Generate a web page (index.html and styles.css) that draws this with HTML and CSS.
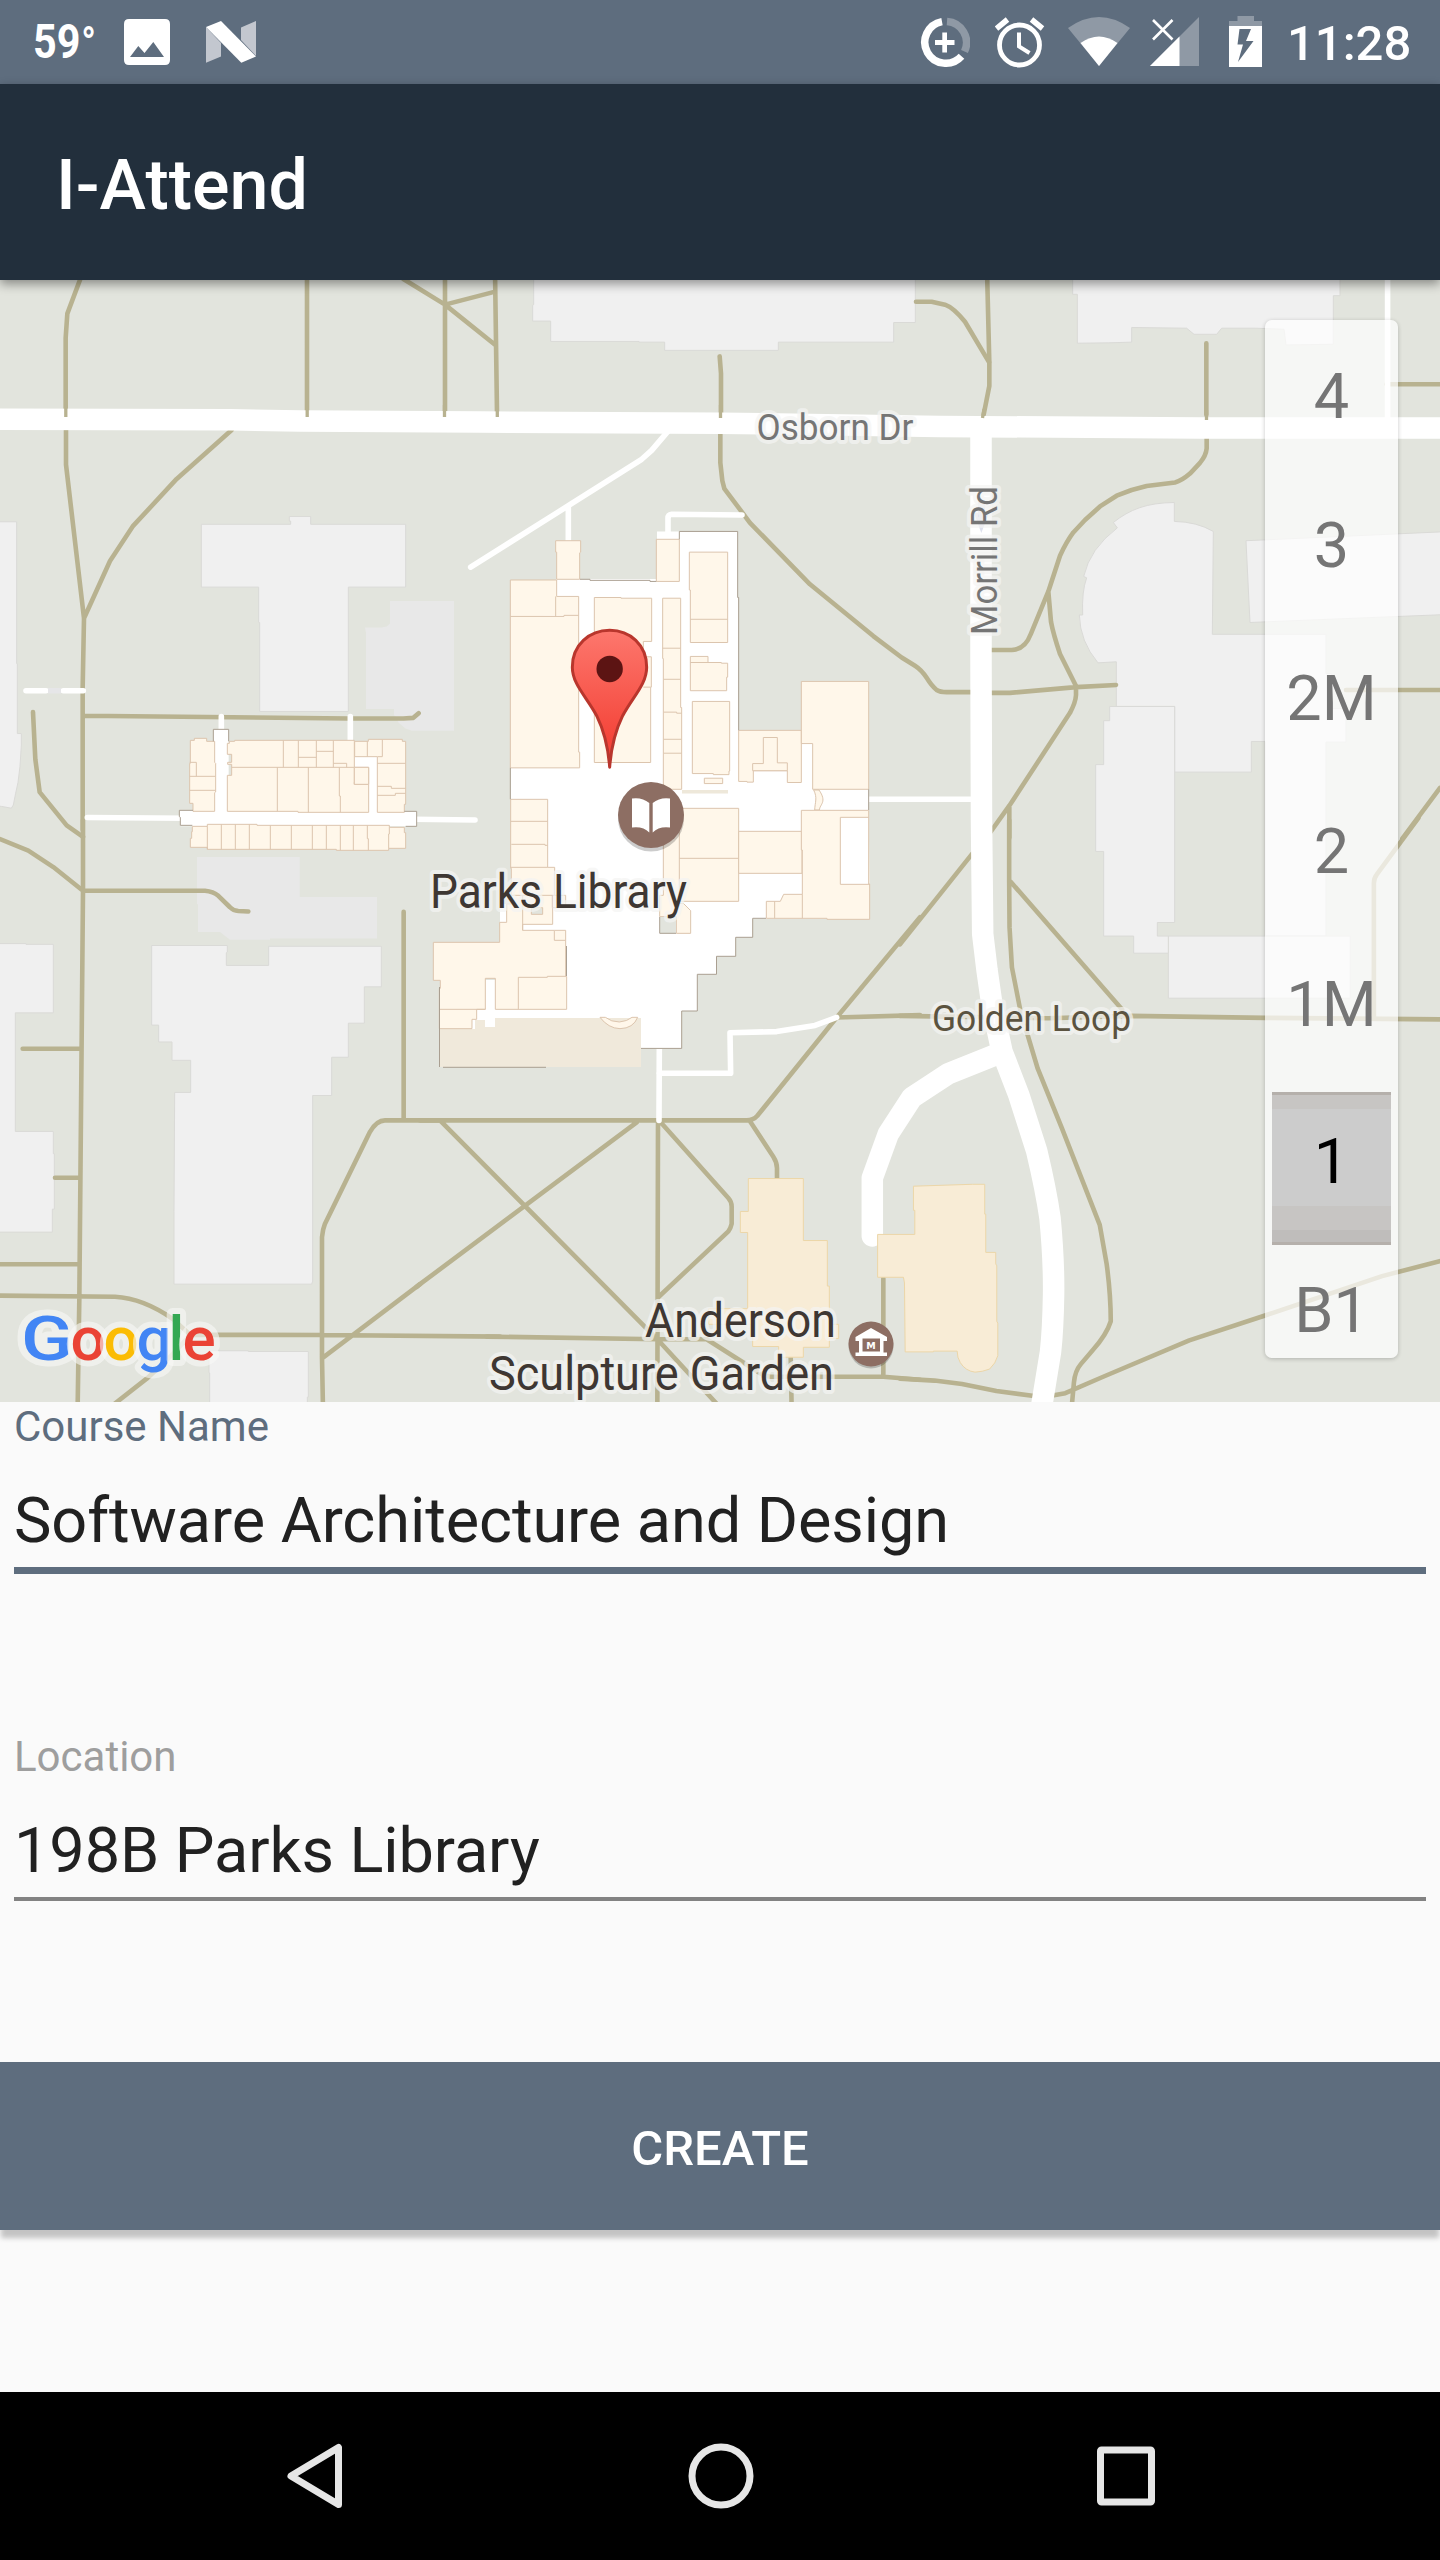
FILE: index.html
```html
<!DOCTYPE html>
<html lang="en">
<head>
<meta charset="utf-8">
<title>I-Attend</title>
<link rel="stylesheet" href="styles.css">
</head>
<body>
<div class="screen">
  <header class="status">
    <div class="status-left">
      <span class="temp">59<span class="deg">°</span></span>
      <svg class="i-image" width="46" height="84" viewBox="0 0 46 84"><path fill="#fff" fill-rule="evenodd" d="M5 19H41Q46 19 46 24V60Q46 65 41 65H5Q0 65 0 60V24Q0 19 5 19ZM6 57H40L29.3 42 20.5 53 14.3 46Z"/></svg>
      <svg class="i-n" width="50" height="84" viewBox="0 0 50 84"><path fill="#c3c7cf" d="M0 27L15 43V56.500L0 62.700ZM35 27.500L50 21V56L35 40Z"/><path fill="#fff" d="M0 27L15 21 50 56.500 35.300 62.700Z"/></svg>
    </div>
    <div class="status-right">
      <svg class="i-saver" width="50" height="84" viewBox="0 0 50 84"><g fill="none" stroke-width="7.500"><path stroke="#fff" d="M22 21.600A21 21 0 1 0 41.500 56.200"/><path stroke="#8f99a5" d="M27 21.600A21 21 0 0 1 44.500 51.500"/></g><path fill="#fff" d="M22.300 32.500H27V40H34.500V45H27V52.500H22.300V45H15V40H22.300Z"/></svg>
      <svg class="i-alarm" width="50" height="84" viewBox="0 0 50 84"><g fill="none" stroke="#fff"><circle cx="24.500" cy="45" r="20" stroke-width="4.800"/><path stroke-width="4" d="M24 32.500V46.500L34.500 53"/><path stroke-width="5.500" d="M1.500 28.500L12.500 19.500M36.500 19.500L47.500 28.500"/></g></svg>
      <svg class="i-wifi" width="62" height="84" viewBox="0 0 62 84"><path fill="#8f99a5" d="M0 28Q31 6 62 28L31 66Z"/><path fill="#fff" d="M12.500 43Q31 30 49.500 43L31 66Z"/></svg>
      <svg class="i-cell" width="49" height="84" viewBox="0 0 49 84"><path fill="#8f99a5" d="M49 17V66H0Z"/><path fill="#fff" d="M29.500 36.500V66H0Z"/><path stroke="#fff" stroke-width="2.600" d="M3 20L22.500 39.500M22.500 20L3 39.500"/></svg>
      <svg class="i-batt" width="33" height="84" viewBox="0 0 33 84"><path fill="#8f99a5" d="M0 21H8.500V16H25V21H33V26H0Z"/><path fill="#fff" fill-rule="evenodd" d="M0 26H33V67H0ZM10.500 29L8.500 44.500H14L9 62 24.500 41H17L22 29Z"/></svg>
      <span class="clock">11:28</span>
    </div>
  </header>
  <div class="appbar"><h1>I-Attend</h1></div>

  <main class="map">
    <svg class="tiles" width="1440" height="1122" viewBox="0 280 1440 1122">
      <defs>
        <linearGradient id="pin" x1="0" y1="0" x2="0" y2="1"><stop offset="0" stop-color="#fd776d"/><stop offset=".8" stop-color="#f4453a"/></linearGradient>
      </defs>
      <rect y="280" width="1440" height="1122" fill="#e2e4dd"/>

      <!-- lawns and plazas -->
      <path class="plaza" transform="translate(0 270) scale(.33333 .35714)" d="M1170 927H1362V1290H1235L1215 1283 1196 1268 1182 1245V1229H1098V1015L1095 1001H1145L1160 998 1170 990Z"/>
      <path class="plaza" transform="translate(0 820) scale(.33333 .38265)" d="M591 97H899V201H1131V310H810V313H690L660 293H594V220H591Z"/>

      <!-- outlying buildings -->
      <g class="bldg">
        <path transform="translate(0 270) scale(.33333 .35714)" d="M-9 705H50V1102H52V1298H64V1330L60 1390 54 1435 47 1465 40 1498 34 1507 5 1502-9 1500ZM604 712H872V703H868V690H932V712H1217V888H1045V1236H779V987H776V888H604Z"/>
        <path transform="translate(480 270) scale(.33333 .35714)" d="M161 0V97L158 99V143H212V200H477V202H554V225H895V202H1241V147H1306V0Z"/>
        <g transform="translate(940 270) scale(.33333 .35714)">
          <path d="M398 0V68H412V205L505 204 575 202V161L740 163 762 180H830L845 163H948L1032 166 1038 210 1180 208V72H1200V0Z"/>
          <path d="M520 707C570 670 620 652 703 651V704Q770 705 820 732L817 1020H1158V1130H1175V1228H1218V1322H1158V1865H975V1320H934V1406H704V1222H529V1097L474 1100Q420 1040 418 966H428Q425 900 440 862L431 858Q450 780 532 722Z"/>
          <path d="M918 758L1510 733V965L930 987Z"/>
          <path d="M685 1865H1231V2039H685Z"/>
          <path d="M509 1222H704V1827H652V1865H685V1913H581V1865H491V1628H467V1385H491V1262H509Z"/>
        </g>
        <path transform="translate(0 820) scale(.33333 .38265)" d="M-9 323H78V325H160V504H46V814H160V872H163V1017H157V1077H-9ZM455 328H682V345L679 347V380H806V330H1144V436H1093V531H1045V620H995V720H938V1205L935 1213H522V1023L524 712H572V628H516V580H476V536H455ZM627 1387H745V1389H925V1508H922V1560H629V1445H627Z"/>
      </g>

      <!-- footpaths -->
      <g class="path">
        <path transform="translate(0 270) scale(.33333 .35714)" d="M245 15L202 122 197 190V400M198 445V545L252 975 248 1170V1568M695 448L530 585 398 718 330 815 252 975M921 0V400M1335 0V400M1210 25L1335 97 1486 210M1335 97L1480 62M1485 0L1491 400M250 1248L1045 1256H1210L1240 1254 1256 1241M99 1238L106 1370 119 1462 200 1555 249 1587"/>
        <path transform="translate(480 270) scale(.33333 .35714)" d="M719 242L723 290V400M721 458V540L727 590 733 612 810 708 990 880 1180 1025 1265 1085 1305 1108Q1325 1120 1340 1142 1355 1165 1370 1176 1380 1182 1400 1182H1500M1308 89H1355L1395 97Q1420 105 1455 145L1527 258"/>
        <path transform="translate(940 270) scale(.33333 .35714)" d="M141 0L148 260V325L131 405M799 205V405M800 465V500Q798 520 780 540L750 570Q725 590 705 595L620 605 575 616 530 632 480 662 435 700 400 735Q380 760 360 800L325 900 272 1020Q255 1063 215 1064H150M325 900L333 985Q340 1020 360 1075L408 1165V1190Q407 1210 390 1240L208 1500 120 1615M150 1184H210L408 1168 528 1162M208 1500V1590M1340 320H1510M1218 1176H1510M1500 1450L1387 1592"/>
        <path transform="translate(0 820) scale(.33333 .38265)" d="M249 0V185L238 1250 233 1530M0 50L85 80 160 123 249 185H615Q640 187 655 198L690 228Q700 237 715 238L745 239M68 598H243M165 935H238M-9 1161H236M-9 1243L345 1246Q430 1250 520 1305L570 1345 965 1346 1500 1350M570 1345Q530 1390 440 1460L330 1535M1211 240V785M969 1540L966 1405V1090Q968 1070 975 1055L1110 815Q1130 785 1155 785H1320M969 1405L1260 1213"/>
        <path transform="translate(420 820) scale(.33333 .38265)" d="M0 785H980Q1000 785 1012 773L1250 516 1500 254M60 785L712 1357M0 1213L650 790M714 790L712 1540M722 790L925 988Q935 998 935 1010V1055Q932 1067 925 1075L714 1248M990 787L1060 880Q1071 895 1071 910V940M0 1213L-10 1220M200 1350L712 1357H860L1010 1440Q1030 1452 1050 1455H1390L1500 1463M712 1357L900 1535M1390 1198V1455M1112 1400L1115 1540M1250 516L1500 510"/>
        <path transform="translate(900 820) scale(.34439 .38265)" d="M317 0V160L318 280 325 385 350 500 400 650 470 805 580 1058 600 1160Q612 1240 612 1310 600 1345 560 1385L525 1422Q508 1440 505 1470L498 1540M322 162L645 495M0 512L430 518 670 512 1060 517 1580 521M210 88L0 325M1505-5L1384 143Q1376 152 1376 165V518M1580 1150L1400 1192 1060 1295 840 1360 590 1455 480 1498 430 1506M395 1506L280 1492 180 1474 100 1465 0 1460"/>
      </g>

      <!-- service walks -->
      <g class="walk">
        <path transform="translate(0 270) scale(.33333 .35714)" d="M78 1178H138M190 1178H250M262 1533L565 1535M1240 1538L1425 1540M664 1250V1300M1051 1250V1326"/>
        <path transform="translate(480 270) scale(.33333 .35714)" d="M-28 832L265 660 485 530 515 505 570 445M265 665V760M564 760V695Q564 685 575 684L786 686M1168 1482H1500"/>
        <path d="M1387.600 270V425"/>
        <path transform="translate(420 820) scale(.33333 .38265)" d="M718 590L717 785M717 662H932L930 556 1070 553 1185 537 1250 516"/>
      </g>
      <path d="M48 690.700H61" stroke="#e6e6e8" stroke-width="5.500"/>

      <!-- roads -->
      <g class="road">
        <path d="M-10 419.300L230 419.700 300 421 480 422 720 423.200 940 426.400 1200 428H1450"/>
        <path d="M981 426V660L981.500 820 982.700 934 987 970 992 1005 1002 1051.500 1018.800 1095 1036.700 1151Q1046 1190 1050 1218 1054 1260 1053.600 1294 1053 1330 1050.500 1352L1041 1410"/>
        <path class="cap" d="M1000 1053L948.200 1073.700 912 1097.400 888.300 1133.800 872.300 1177.800V1236"/>
      </g>
      <path class="stub" d="M65.800 405V417M307.200 405V417M444.500 405V417M497.300 405V417M720.500 405V418M984 409L982.500 418M1206.500 410V420"/>

      <!-- highlighted buildings -->
      <g class="tan">
        <path transform="translate(420 820) scale(.33333 .38265)" d="M985 937H1150V1099H1222V1218H1228V1318H1256V1355H1228V1378H1150V1404H1076V1376H998V1318H866V1277H983V1078H961V1023H985Z"/>
        <path transform="translate(900 820) scale(.34439 .38265)" d="M39 957L210 952H246V1030H249V1130H278V1160L281 1165V1310L284 1315V1400Q278 1420 260 1435 240 1442 218 1443 190 1440 175 1418 166 1405 166 1388H97V1390H15L13 1210 10 1195H-65V1083H43V1020H39Z"/>
      </g>

      <!-- west hall floor plan -->
      <g transform="translate(160 700) scale(.33333)">
        <path class="hall" d="M160 88H206V334H580V160H656V334H770V379H61V352L58 350V331H160Z"/>
        <g class="room">
          <path d="M91 121H103V115H140V124H164V187L167 190V276L164 278V334H99V310H89V190H91ZM89 187H109V229M89 229H166M89 271H166"/>
          <path d="M208 124H224V121H583V253H626V337H414V334H202V226H215V193H203V187H215V163H202V130H208Z"/>
          <path d="M215 202H626V253M370 121V202M415 121V202M469 121V202M520 121V202M415 172H469M469 154H520M520 190H560V202M352 202V334M445 202V337M538 202V288H541V337M583 202V253"/>
          <path d="M584 124H625V118H727V124H737V313H733V337H652V170H584Z"/>
          <path d="M622 124V170M652 170H667V118M652 190H737M652 259H694V265H737M652 286H706V280H737"/>
          <path d="M583 202H626V253H583Z"/>
          <path d="M97 379H142V373H291V376H688V382H733V398H737V445H686V451H529V448H142V442H91V415H95V395H97Z"/>
          <path d="M142 379V448M184 373V448M226 373V448M268 373V448M331 376V448M394 376V448M457 376V448M499 376V448M541 376V451M580 376V451M622 376V416H625V451M688 382V402H686V445"/>
        </g>
        <path class="wall" d="M160 124V88H206V124M97 376H61V352L58 350V331H99M733 334H770V379H737"/>
      </g>

      <!-- Parks Library floor plan -->
      <path class="hall" d="M510.500 580H556V579H657V531.500H737.700V597H738.300V730.500H802V681.500H869V919H752.700V937.300H735.700V956.300H716.500V974.300H697.300V1011H681.700V1048.400H641V1029H440V980H500V904H511Z"/>
      <path fill="#f0e9db" d="M439.500 1029H475V1020H485V1027H495V1018H641V1067H439.500Z"/>
      <g class="room" transform="translate(480 270) scale(.33333 .35714)">
        <path d="M227 758H302V790L299 792V866H230V790H227Z"/>
        <path d="M91 868H230V914H296V1350H299V1394H91ZM227 914V970M91 970H252V967H296"/>
        <path d="M529 754H598V872H529Z"/>
        <path d="M343 917H423V919H515V1040H490V1083H514V1168H512V1379H343ZM490 1168H512"/>
        <path d="M548 919H602V1225H605V1454H550V1088H548ZM548 1059H602M551 1146H602M551 1238H590V1241H605M551 1314H605M551 1353H605"/>
        <path d="M628 790H743V1043H631V896H628ZM631 978H743"/>
        <path d="M631 1082H684V1099H724V1101H743V1140H740V1178H631ZM631 1099H684"/>
        <path d="M637 1208H749V1403H747V1413H700V1410H637ZM673 1423H728V1438H673Z"/>
        <path d="M776 1289H964V1435H922V1402H820V1434H801V1432H776Z"/>
        <path d="M818 1402V1382H850V1309H892V1380H922V1402Z"/>
        <path d="M964 1152H1166V1454H998V1326H964Z"/>
        <path d="M1001 1456C1013 1478 1005 1490 1004 1512H1018C1020 1495 1042 1490 1017 1456Z"/>
      </g>
      <path d="M682 791.800H728" stroke="#eee8da" stroke-width="3.500"/>
      <g class="room" transform="translate(400 760) scale(.33333)">
        <path d="M332 118H443V322H464V406H497V443H458V493H368V511H497V650H500V748H286V655H256V748H230V778H216V806H118V685H121V661H100V547H299V487H320V432H334V325H332Z"/>
        <path d="M332 184H443M334 253H435V256H443M332 322H443M334 406H464M368 406V511M457 406V443M463 511V541H497M355 748V652H442V649H500M118 748H256"/>
        <path fill="#e2e4dd" d="M394 443H428V463H394Z"/>
        <path d="M790 145H1016V424H838V430H850L872 452V520H829V470H779V406H790ZM838 145V424M838 295H1016"/>
        <path d="M1016 214H1206V340H1016Z"/>
        <path d="M1204 151H1406V372H1409V478H1281V475H1099V424H1141L1151 403H1207V270H1204ZM1124 424V475M1207 403V475M1406 172H1321V373H1409"/>
        <path d="M600 772H616Q634 786 658 786 682 784 696 772H713Q700 805 660 806 625 805 600 772Z"/>
      </g>
      <path fill="#e2e4dd" d="M660 917H676V933.300H660Z"/>
      <g class="wall">
        <path transform="translate(480 270) scale(.33333 .35714)" d="M598 754V732H773V917H776V1289M300 866H330V869H510V872H529M91 1394V1482M1166 1454V1512"/>
        <path d="M766 918.300H752.700V937.300H735.700V956.300H716.500V974.300H697.300V1011H681.700V1048.400H641M659.700 917V933.300H676M439.500 987V1067M443 1067.300H546M566.500 946V976"/>
      </g>

      <!-- one-way arrow on Morrill Rd -->
      <path fill="#dfe2ee" d="M978 500H985V513H989L981.300 533 974 513H978Z"/>

      <!-- labels -->
      <g class="label">
        <text class="street" x="756.500" y="439.500" font-size="37" textLength="157" lengthAdjust="spacingAndGlyphs">Osborn Dr</text>
        <text class="street" transform="translate(996.500 635) rotate(-90)" font-size="37.500" textLength="149" lengthAdjust="spacingAndGlyphs">Morrill Rd</text>
        <text class="loop" x="932" y="1030.500" font-size="37" textLength="199" lengthAdjust="spacingAndGlyphs">Golden Loop</text>
        <text x="430" y="907.500" font-size="48" textLength="257" lengthAdjust="spacingAndGlyphs">Parks Library</text>
        <text x="645" y="1336.500" font-size="48" textLength="191" lengthAdjust="spacingAndGlyphs">Anderson</text>
        <text x="489" y="1389.500" font-size="48" textLength="345" lengthAdjust="spacingAndGlyphs">Sculpture Garden</text>
      </g>

      <!-- points of interest -->
      <circle cx="651" cy="818.500" r="33" fill="#000" opacity=".2"/>
      <circle cx="651" cy="815" r="33" fill="#8d6e63"/>
      <path fill="#fff" d="M632 798.500Q642 797 649.300 803V832.500Q643 826 632 827.500ZM670 798.500Q660 797 652.700 803V832.500Q659 826 670 827.500Z"/>
      <circle cx="871" cy="1346" r="22.500" fill="#000" opacity=".2"/>
      <circle cx="871" cy="1344" r="22.500" fill="#8d6e63"/>
      <path fill="#fff" fill-rule="evenodd" d="M871 1328L887 1337V1341H883.500V1352.500H887V1356H855.500V1352.500H859V1341H855.500V1337ZM862.500 1338.500V1351.500H880V1338.500Z"/>
      <text x="871" y="1348.600" font-size="9.500" font-family="DejaVu Sans, sans-serif" font-weight="700" text-anchor="middle" fill="#fff">M</text>

      <!-- dropped pin -->
      <g transform="translate(480 270) scale(.33333 .35714)">
        <path fill="url(#pin)" stroke="#b9362d" stroke-width="3" stroke-linejoin="round" d="M389 1392C384 1330 372 1290 350 1248 320 1195 277 1160 277 1112 277 1050 328 1009 389 1009S500 1050 500 1112C500 1160 458 1195 428 1248 406 1290 394 1330 389 1392Z"/>
        <ellipse cx="389" cy="1117" rx="39.500" ry="37" fill="#5c1413"/>
      </g>

      <g class="google">
        <text x="21" y="1360" fill="#4285f4" textLength="52" lengthAdjust="spacingAndGlyphs">G</text>
        <text x="70.500 103.500 136.500 168.500 182.500" y="1360"><tspan fill="#ea4335">o</tspan><tspan fill="#fbbc05">o</tspan><tspan fill="#4285f4">g</tspan><tspan fill="#34a853">l</tspan><tspan fill="#ea4335">e</tspan></text>
      </g>
    </svg>
    <ul class="floors">
      <li class="top">4</li><li>3</li><li>2M</li><li>2</li><li>1M</li><li class="on">1</li><li>B1</li>
    </ul>
  </main>

  <form class="form">
    <div class="field focus"><label>Course Name</label><div class="value">Software Architecture and Design</div></div>
    <div class="field"><label>Location</label><div class="value">198B Parks Library</div></div>
    <button class="create" type="button">CREATE</button>
  </form>

  <nav class="nav">
    <svg width="58" height="68" viewBox="0 0 58 68"><path d="M52.500 5.500V62.500L5 34Z"/></svg>
    <svg width="66" height="68" viewBox="0 0 66 68"><circle cx="33" cy="34" r="29"/></svg>
    <svg width="58" height="68" viewBox="0 0 58 68"><rect x="3.500" y="8" width="51" height="52" rx="1"/></svg>
  </nav>
</div>
</body>
</html>
```
FILE: styles.css
```css
* { box-sizing: border-box; }
body { margin: 0; background: #fafafa; font-family: Roboto, "Noto Sans", sans-serif; }
svg { display: block; flex: none; }
.screen { display: flex; flex-direction: column; width: 1440px; height: 2560px; overflow: hidden; }

.status { display: flex; justify-content: space-between; height: 84px; background: #5e6d7e; color: #fff; line-height: 84px; }
.status-left, .status-right { display: flex; }
.temp { width: 91px; margin-left: 33px; font-size: 48px; font-weight: 700; line-height: 84px; transform: scaleX(.86); transform-origin: 0 0; white-space: nowrap; }
.deg { margin-left: 1px; font-size: 44px; line-height: 1; }
.i-n { margin-left: 36px; }
.i-alarm { margin-left: 25px; }
.i-wifi { margin-left: 23px; }
.i-cell { margin-left: 20px; }
.i-batt { margin-left: 30px; }
.clock { width: 153px; margin-left: 25px; padding-top: 2px; font-size: 49px; font-weight: 500; white-space: nowrap; }

.appbar { position: relative; z-index: 1; height: 196px; padding: 3px 0 0 56px; background: #222f3c; box-shadow: 0 4px 10px rgba(0, 0, 0, .4); }
.appbar h1 { margin: 0; color: #fff; font-size: 70px; font-weight: 500; line-height: 196px; }

.map { position: relative; height: 1122px; }
.tiles path { vector-effect: non-scaling-stroke; }
.plaza { fill: #e8e8e8; }
.bldg path { fill: #f0f0f0; stroke: #dadad7; stroke-width: 1; }
.path path { fill: none; stroke: #b8b290; stroke-width: 4.6; stroke-linecap: round; stroke-linejoin: round; }
.stub { stroke: #b8b290; stroke-width: 3.3; }
.walk path { fill: none; stroke: #fff; stroke-width: 5.6; stroke-linecap: round; stroke-linejoin: round; }
.road path { fill: none; stroke: #fff; stroke-width: 21.5; stroke-linejoin: round; }
.road .cap { stroke-linecap: round; }
.tan path { fill: #f8ecd6; stroke: #ecd6a8; stroke-width: 1; }
.hall { fill: #fff; }
.room path { fill: #fff7ea; stroke: #dcc5ae; stroke-width: 1; }
.room path[fill] { fill: #e2e4dd; }
.wall, .wall path { fill: none; stroke: #aa9f91; stroke-width: 1; }
.label text { fill: #3e3733; stroke: rgba(244, 244, 243, .72); stroke-width: 8px; stroke-linejoin: round; paint-order: stroke; font-family: Roboto, sans-serif; }
.label .street { fill: #757575; }
.label .loop { fill: #5b5340; }
.google { font-family: Roboto, sans-serif; font-size: 62px; font-weight: 500; stroke: rgba(248, 248, 247, .6); stroke-width: 12px; stroke-linejoin: round; paint-order: stroke; }

.floors { position: absolute; left: 1265px; top: 40px; width: 133px; height: 1038px; margin: 0; padding: 7px 7px 0; display: grid; grid-auto-rows: 153px; overflow: hidden; list-style: none; background: rgba(255, 255, 255, .7); border-radius: 7px; box-shadow: 0 1px 4px rgba(0, 0, 0, .22); }
.floors li { color: #757575; font-size: 63px; line-height: 132px; text-align: center; }
.floors .top { line-height: 140px; }
.floors .on { color: #000; line-height: 140px; background: linear-gradient(#b5b0ab 3px, #c7c5c3 3px 17px, #ccc 17px 114px, #c7c5c3 114px 138px, #bfbdbb 138px 150px, #b5b0ab 150px); }

.form { display: flex; flex-direction: column; height: 990px; }
.field { height: 330px; margin: 0 14px; }
.field label { display: block; font-size: 42px; line-height: 50px; color: #9e9e9e; }
.value { margin-top: 32px; height: 87px; padding-bottom: 10px; border-bottom: 4px solid #828282; color: #212121; font-size: 63px; letter-spacing: -.07px; line-height: 74px; }
.field.focus label { color: #5e6d7e; }
.focus .value { height: 90px; border-bottom: 7px solid #5e6d7e; }
.create { height: 168px; padding: 5px 0 0; border: 0; background: #5e6d7e; color: #fff; font-family: inherit; font-size: 49px; font-weight: 500; line-height: 163px; box-shadow: 0 9px 5px -1px rgba(0, 0, 0, .22); }

.nav { display: flex; justify-content: space-between; align-items: center; height: 168px; padding: 0 285px 0 286px; background: #000; }
.nav svg { fill: none; stroke: #e6e6e6; stroke-width: 7; stroke-linejoin: round; }
```
